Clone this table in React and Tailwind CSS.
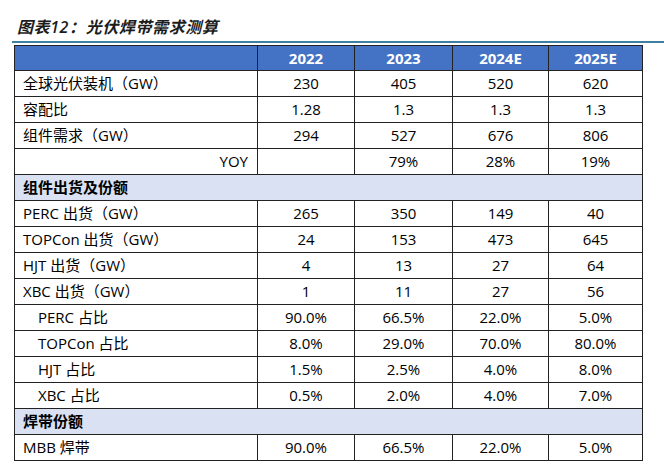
import React from 'react';

const years = ['2022', '2023', '2024E', '2025E'];

// kind: row | indent | yoy | section
const rows = [
  { kind: 'row', label: '全球光伏装机（GW）', vals: ['230', '405', '520', '620'] },
  { kind: 'row', label: '容配比', vals: ['1.28', '1.3', '1.3', '1.3'] },
  { kind: 'row', label: '组件需求（GW）', vals: ['294', '527', '676', '806'] },
  { kind: 'yoy', label: 'YOY', vals: ['', '79%', '28%', '19%'] },
  { kind: 'section', label: '组件出货及份额' },
  { kind: 'row', label: 'PERC 出货（GW）', vals: ['265', '350', '149', '40'] },
  { kind: 'row', label: 'TOPCon 出货（GW）', vals: ['24', '153', '473', '645'] },
  { kind: 'row', label: 'HJT 出货（GW）', vals: ['4', '13', '27', '64'] },
  { kind: 'row', label: 'XBC 出货（GW）', vals: ['1', '11', '27', '56'] },
  { kind: 'indent', label: 'PERC 占比', vals: ['90.0%', '66.5%', '22.0%', '5.0%'] },
  { kind: 'indent', label: 'TOPCon 占比', vals: ['8.0%', '29.0%', '70.0%', '80.0%'] },
  { kind: 'indent', label: 'HJT 占比', vals: ['1.5%', '2.5%', '4.0%', '8.0%'] },
  { kind: 'indent', label: 'XBC 占比', vals: ['0.5%', '2.0%', '4.0%', '7.0%'] },
  { kind: 'section', label: '焊带份额' },
  { kind: 'row', label: 'MBB 焊带', vals: ['90.0%', '66.5%', '22.0%', '5.0%'] },
];

const font = { fontFamily: '"Open Sans", "Noto Sans CJK SC", sans-serif' };

export default function App() {
  return (
    <div className="w-[664px] h-[469px] bg-white overflow-hidden" style={font}>
      <div className="pt-[16px] pl-[17px] h-[41px]">
        <h1 className="text-[16px] leading-[22px] italic font-semibold text-[#1c1c1c] tracking-[0.6px]">
          图表12：光伏焊带需求测算
        </h1>
      </div>
      <div className="ml-[12px] h-[2px] bg-[#3f7f9f]" />
      <table className="ml-[14px] mt-[2px] w-[628px] table-fixed border-collapse border border-[#333] text-[15px] text-black">
        <colgroup>
          <col className="w-[243px]" />
          <col className="w-[97px]" />
          <col className="w-[98px]" />
          <col className="w-[96px]" />
          <col className="w-[94px]" />
        </colgroup>
        <thead>
          <tr className="h-[25px] bg-[#4472c4] text-white font-bold">
            <th className="border border-[#222] p-0" />
            {years.map((y) => (
              <th key={y} className="border border-[#222] p-0 text-center leading-none">{y}</th>
            ))}
          </tr>
        </thead>
        <tbody>
          {rows.map((r, i) => {
            if (r.kind === 'section') {
              return (
                <tr key={i} className="h-[26px] bg-[#d9e1f2]">
                  <td colSpan={5} className="border border-[#222] p-0 pl-[8px] font-bold leading-none">{r.label}</td>
                </tr>
              );
            }
            const labelClass =
              r.kind === 'indent' ? 'pl-[23px] text-left' : r.kind === 'yoy' ? 'pr-[9px] text-right' : 'pl-[8px] text-left';
            return (
              <tr key={i} className="h-[26px]">
                <td className={`border border-[#222] p-0 leading-none whitespace-nowrap ${labelClass}`}>{r.label}</td>
                {r.vals.map((v, j) => (
                  <td key={j} className="border border-[#222] p-0 text-center leading-none">{v}</td>
                ))}
              </tr>
            );
          })}
        </tbody>
      </table>
    </div>
  );
}
